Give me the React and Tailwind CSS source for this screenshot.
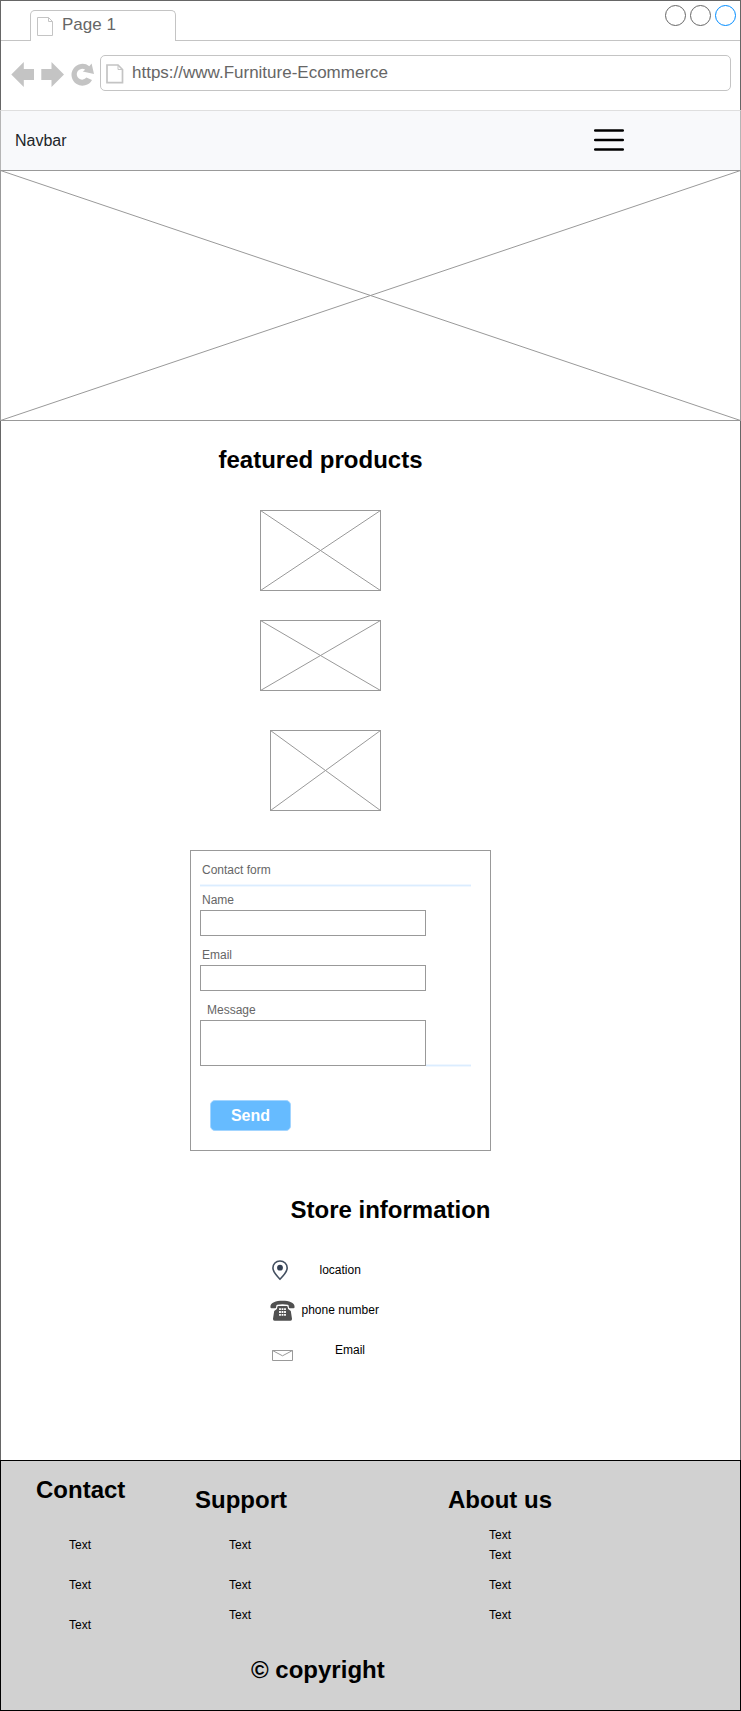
function Placeholder({ className, w, h }) {
  return (
    <svg className={`block shrink-0 ${className || ''}`} width={w} height={h} fill="none" stroke="#999999">
      <rect x="0.5" y="0.5" width={w - 1} height={h - 1} />
      <path d={`M0.5 0.5L${w - 0.5} ${h - 0.5}M${w - 0.5} 0.5L0.5 ${h - 0.5}`} />
    </svg>
  );
}

function BrowserChrome() {
  return (
    <header className="flex h-[110px] flex-col border-x border-t border-[#666] text-[17px] leading-[19px] text-[#666]">
      <div className="flex h-10 items-end">
        <div className="h-px w-[29px] bg-[#c4c4c4]" />
        <div className="flex h-[31px] w-[146px] rounded-t-[5px] border-x border-t border-[#c4c4c4] pl-[6px] pt-[4px]">
          <svg className="mt-[2px] shrink-0" width="17" height="20" fill="none" stroke="#c4c4c4">
            <path d="M0.5 0.5H11.5L15.5 4.5V18.5H0.5ZM11.5 0.5V4.5H15.5" />
          </svg>
          <span className="ml-2">Page 1</span>
        </div>
        <div className="h-full flex-1 border-b border-[#c4c4c4]">
          <div className="flex justify-end gap-1 pr-1 pt-1">
            <div className="size-[21px] rounded-full border border-[#666]" />
            <div className="size-[21px] rounded-full border border-[#666]" />
            <div className="size-[21px] rounded-full border border-[#008cff]" />
          </div>
        </div>
      </div>
      <div className="flex pt-[14px]">
        <svg className="shrink-0" width="99" height="36" viewBox="1 55 99 36" fill="#c4c4c4">
          <path d="M11.3 74.6L23.8 62V69H34V80H23.8V87Z" />
          <path d="M64 74.6L51.5 62V69H41.3V80H51.5V87Z" />
          <path d="M92 80A10.9 10.9 0 1 1 89.3 66.3L91.6 63.4L94 73.9L82.7 71.6L85.2 69.8A5.4 5.4 0 1 0 86.4 77.6Z" />
        </svg>
        <div className="flex h-9 w-[631px] shrink-0 rounded-[5px] border border-[#c4c4c4] pl-[5px] pt-[7px]">
          <svg className="mt-px shrink-0" width="18" height="20" fill="none" stroke="#c4c4c4">
            <path strokeWidth="1.7" d="M1 1H12L16.5 5.5V18.7H1Z" />
            <path d="M12 1V5.5H16.5" />
          </svg>
          <span className="ml-2">https://www.Furniture-Ecommerce</span>
        </div>
      </div>
    </header>
  );
}

function Navbar() {
  return (
    <nav className="flex h-[60px] items-center justify-between border-x border-t border-x-[#b5b5b5] border-t-[#dfdfdf] bg-[#f8f9fb] pl-[14px] pr-[115px] text-base text-[#212529]">
      <span>Navbar</span>
      <svg className="mb-[2px]" width="32" height="24" stroke="#000" strokeWidth="2.7" strokeLinecap="round">
        <path d="M2.3 2.5H29.7M2.3 12H29.7M2.3 21.5H29.7" />
      </svg>
    </nav>
  );
}

function ContactForm() {
  return (
    <form className="ml-[189px] mt-[39px] h-[301px] w-[301px] border border-[#999] pl-[9px] pt-[12px] text-[#666]">
      <p className="ml-[2px]">Contact form</p>
      <div className="mt-[7px] h-[3px] w-[271px] border-y border-[#f0f7ff] bg-[#dbedff]" />
      <p className="ml-[2px] mt-[6px]">Name</p>
      <div className="mt-[3px] h-[26px] w-[226px] border border-[#999]" />
      <p className="ml-[2px] mt-3">Email</p>
      <div className="mt-[3px] h-[26px] w-[226px] border border-[#999]" />
      <p className="ml-[7px] mt-3">Message</p>
      <div className="mt-[3px] flex w-[271px] items-end">
        <div className="h-[46px] w-[226px] border border-[#999]" />
        <div className="-mb-px h-[3px] flex-1 border-y border-[#f0f7ff] bg-[#dbedff]" />
      </div>
      <div className="ml-[10px] mt-[34px] flex h-[31px] w-[81px] items-center justify-center rounded-[5px] border border-[#a3d5ff] bg-[#66bbff] text-base font-bold text-white">
        Send
      </div>
    </form>
  );
}

function StoreInfo() {
  return (
    <section className="ml-[269px]">
      <h2 className="ml-[20.5px] mt-[45px] text-2xl leading-[27px] font-bold">Store information</h2>
      <div className="mt-[37px] flex h-10">
        <svg className="shrink-0" width="26" height="22" viewBox="270 1260 26 22">
          <path d="M280 1261C275.900 1261 272.900 1264 272.900 1268C272.900 1272 276.500 1275.500 280 1279.200C283.500 1275.500 287.200 1272 287.200 1268C287.200 1264 284.100 1261 280 1261Z" fill="none" stroke="#434f60" strokeWidth="1.6" />
          <circle cx="280" cy="1267.700" r="2.900" fill="#344054" />
        </svg>
        <span className="ml-[23.5px] mt-[3px]">location</span>
      </div>
      <div className="flex h-10">
        <svg className="shrink-0" width="26" height="22" viewBox="270 1300 26 22" fill="#505050">
          <path d="M270.500 1307.500C269.700 1302.800 275.500 1300.700 282.500 1300.700C289.500 1300.700 295.300 1302.800 294.500 1307.500Q294.400 1308.300 293.500 1308.300H289.800Q289 1308.300 288.900 1307.500L288.600 1305.600Q288.500 1304.800 287.700 1304.700Q282.500 1304 277.300 1304.700Q276.500 1304.800 276.400 1305.600L276.100 1307.500Q276 1308.300 275.200 1308.300H271.500Q270.600 1308.300 270.500 1307.500Z" />
          <path d="M278.300 1306H286.700Q287.500 1306 287.700 1307L288.100 1309L290.800 1311L292 1318.700Q292.200 1320.700 290.400 1320.700H274.600Q272.800 1320.700 273 1318.700L274.200 1311L276.900 1309L277.300 1307Q277.500 1306 278.300 1306Z" />
          <path stroke="#fff" strokeWidth="1.8" d="M279.100 1309.200H286M279.100 1312H286M279.100 1314.800H286" strokeDasharray="1.800 0.700" />
        </svg>
        <span className="ml-[5.5px] mt-[3px]">phone number</span>
      </div>
      <div className="flex">
        <svg className="ml-[2px] mt-[10px] shrink-0" width="21" height="11" fill="none" stroke="#999">
          <path d="M0.500 0.500H20.500V10.500H0.500ZM0.500 0.500L10.500 5.800L20.500 0.500" />
        </svg>
        <span className="ml-[42px] mt-[3px]">Email</span>
      </div>
    </section>
  );
}

function Footer() {
  return (
    <footer className="h-[251px] border border-black bg-[#d1d1d1]">
      <div className="flex h-[180px]">
        <div className="w-[159px] pl-[35px] pt-[15px]">
          <h2 className="text-2xl leading-[27px] font-bold">Contact</h2>
          <div className="ml-[33px] mt-[35px] flex flex-col gap-[26px]">
            <p>Text</p>
            <p>Text</p>
            <p>Text</p>
          </div>
        </div>
        <div className="w-[253px] pl-[35px] pt-[25px]">
          <h2 className="text-2xl leading-[27px] font-bold">Support</h2>
          <div className="ml-[34px] mt-[25px]">
            <p>Text</p>
            <p className="mt-[26px]">Text</p>
            <p className="mt-4">Text</p>
          </div>
        </div>
        <div className="pl-[35px] pt-[25px]">
          <h2 className="text-2xl leading-[27px] font-bold">About us</h2>
          <div className="ml-[41px] mt-[15px]">
            <p>Text</p>
            <p className="mt-[6px]">Text</p>
            <p className="mt-4">Text</p>
            <p className="mt-4">Text</p>
          </div>
        </div>
      </div>
      <h2 className="ml-[250px] mt-[15px] text-2xl leading-[27px] font-bold">© copyright</h2>
    </footer>
  );
}

export default function App() {
  return (
    <div className="flex w-[741px] flex-col bg-white font-['Liberation_Sans',Arial,sans-serif] text-xs leading-[14px] text-black">
      <BrowserChrome />
      <Navbar />
      <Placeholder w={741} h={251} />
      <main className="h-[1039px] border-x border-[#666]">
        <h2 className="ml-[217.5px] pt-[25px] text-2xl leading-[27px] font-bold">featured products</h2>
        <Placeholder className="ml-[259px] mt-[37px]" w={121} h={81} />
        <Placeholder className="ml-[259px] mt-[29px]" w={121} h={71} />
        <Placeholder className="ml-[269px] mt-[39px]" w={111} h={81} />
        <ContactForm />
        <StoreInfo />
      </main>
      <Footer />
    </div>
  );
}
